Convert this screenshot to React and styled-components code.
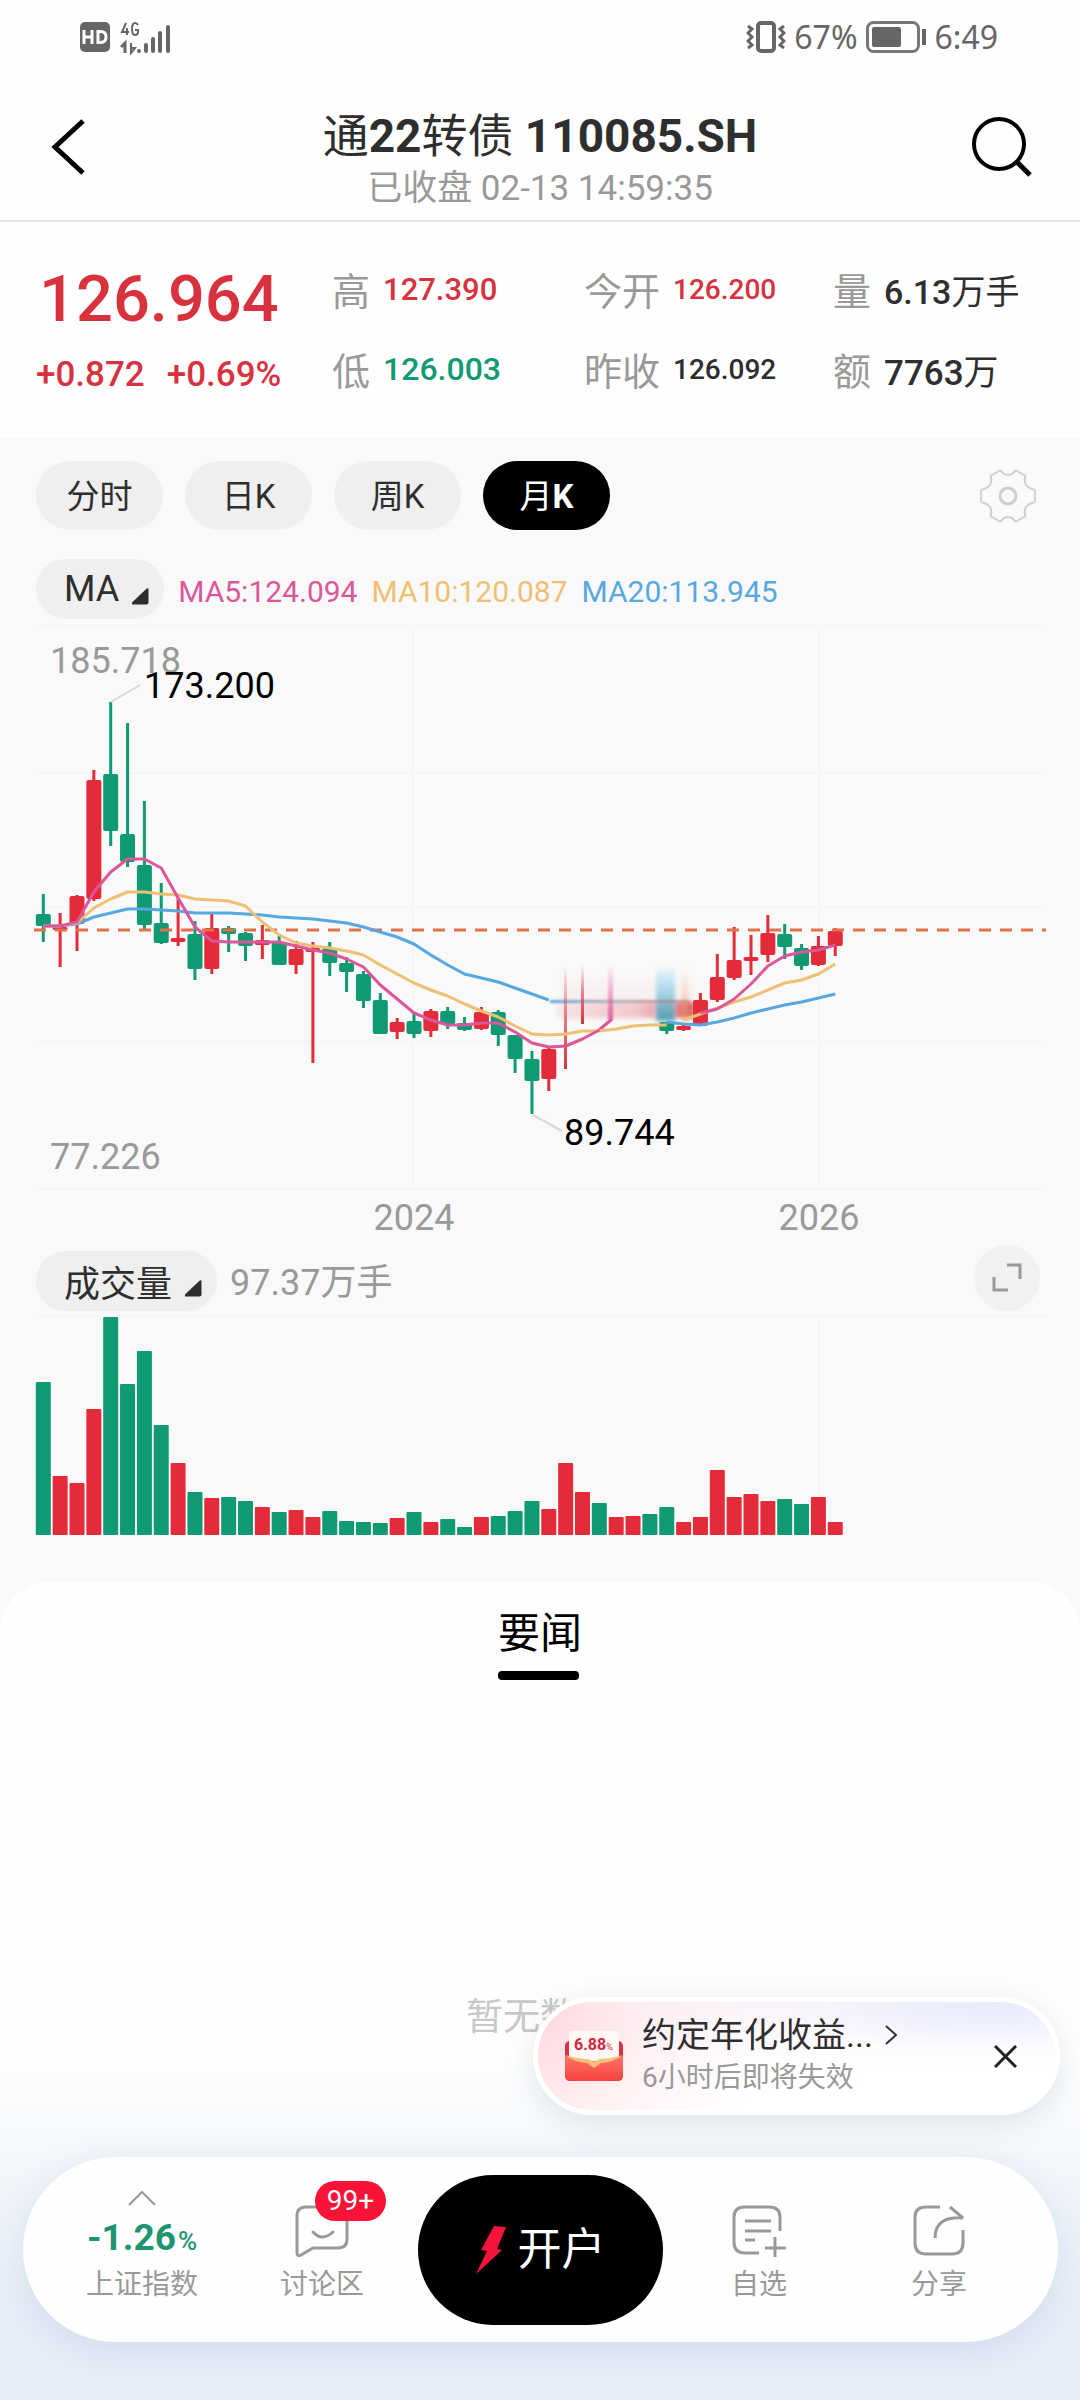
import React, { useState } from "react";
import styled, { createGlobalStyle } from "styled-components";

const theme = {
  red: "#e42b3a",
  price: "#d8323f",
  green: "#0f9a74",
  text: "#2e2e2e",
  muted: "#999999",
  panel: "#f9f9f9",
  pill: "#efefef",
  pink: "#dc569c",
  yellow: "#efbf73",
  blue: "#57a8e0",
};

const GlobalStyle = createGlobalStyle`
  * {
    box-sizing: border-box;
  }

  body {
    margin: 0;
    background: ${theme.panel};
    color: ${theme.text};
    font-family: Roboto, "Noto Sans CJK SC", sans-serif;
  }

  button {
    padding: 0;
    border: none;
    background: none;
    color: inherit;
    font: inherit;
    cursor: pointer;
  }

  svg {
    display: block;
    flex-shrink: 0;
  }
`;

const Page = styled.main`
  display: flex;
  flex-direction: column;
  min-height: 100vh;
`;

const StatusBar = styled.div`
  display: flex;
  align-items: center;
  justify-content: space-between;
  height: 73px;
  padding: 0 82px 0 80px;
  background: #fefefe;
  color: #666;
  font-family: "Noto Sans", sans-serif;
  font-size: 32px;
`;

const StatusGroup = styled.div`
  display: flex;
  align-items: center;
  gap: ${(props) => props.$gap || 8}px;
`;

const Header = styled.header`
  display: flex;
  align-items: center;
  justify-content: space-between;
  height: 149px;
  padding: 0 48px;
  background: #fefefe;
  border-bottom: 2px solid #e2e2e2;
`;

const Titles = styled.div`
  padding-top: 26px;
  text-align: center;
`;

const Title = styled.h1`
  margin: 0;
  font-size: 46px;
  font-weight: 400;
  line-height: 58px;
`;

const Subtitle = styled.p`
  margin: 0;
  color: ${theme.muted};
  font-size: 35px;
  line-height: 48px;
`;

const Quote = styled.section`
  display: flex;
  height: 216px;
  padding: 26px 36px;
  background: #fefefe;
`;

const PriceBlock = styled.div`
  width: 296px;
  color: ${theme.price};
  font-weight: 500;
  white-space: nowrap;
`;

const Price = styled.div`
  padding: 9px 0 0 3px;
  font-size: 65px;
  line-height: 84px;
`;

const Change = styled.div`
  display: flex;
  gap: 22px;
  font-size: 35px;
  line-height: 68px;
`;

const Stats = styled.dl`
  display: grid;
  flex: 1;
  grid-template-columns: 252fr 249fr 211fr;
  grid-auto-rows: 80px;
  margin: 0;
`;

const Stat = styled.div`
  display: flex;
  align-items: center;
  gap: 13px;
  white-space: nowrap;

  dt {
    color: ${theme.muted};
    font-size: 38px;
  }

  dd {
    margin: 0;
    padding-top: 2px;
    color: ${(props) => props.$color || theme.text};
    font-size: ${(props) => props.$size}px;
    font-weight: 500;
  }
`;

// the unit after a number stays at regular weight
const Unit = styled.span`
  font-weight: 400;
`;

const ChartPanel = styled.section`
  padding: 23px 0 47px;
`;

const ToolRow = styled.div`
  display: flex;
  align-items: center;
  justify-content: space-between;
  padding: 0 44px 0 36px;
`;

const Tabs = styled.div`
  display: flex;
  gap: 22px;
`;

const Tab = styled.button`
  width: 127px;
  height: 69px;
  padding-bottom: 3px;
  border-radius: 35px;
  background: ${(props) => (props.$active ? "#000" : theme.pill)};
  color: ${(props) => (props.$active ? "#fff" : theme.text)};
  font-size: 33px;

  b {
    font-weight: ${(props) => (props.$active ? 700 : 400)};
  }
`;

const IndicatorRow = styled.div`
  display: flex;
  align-items: center;
  gap: 14px;
  margin-top: 29px;
  padding: 0 36px;
`;

const Picker = styled.button`
  display: flex;
  align-items: center;
  gap: 12px;
  height: 60px;
  padding: 0 15px 0 28px;
  border-radius: 30px;
  background: ${theme.pill};
  font-size: 36px;

  svg {
    margin-top: 14px;
  }
`;

const Average = styled.span`
  padding-top: 6px;
  color: ${(props) => props.$color};
  font-size: 30px;
  line-height: 54px;
`;

const VolumeRow = styled.div`
  display: flex;
  align-items: flex-end;
  gap: 13px;
  height: 66px;
  padding: 0 40px 0 36px;
`;

const VolumeValue = styled.span`
  flex: 1;
  color: ${theme.muted};
  font-size: 36px;
  line-height: 56px;
`;

const ExpandButton = styled.button`
  display: grid;
  place-items: center;
  width: 66px;
  height: 66px;
  border-radius: 50%;
  background: #f1f1f1;
`;

const Chart = styled.svg`
  width: 100%;
  height: auto;
  font-size: 36px;
`;

const News = styled.section`
  display: flex;
  flex: 1;
  flex-direction: column;
  align-items: center;
  padding-top: 27px;
  border-radius: 50px 50px 0 0;
  background: linear-gradient(#fefefe, #fefefe 58%, #f1f5fa 74%, #e7edf8 90%);
`;

const NewsTab = styled.h2`
  margin: 0;
  color: #000;
  font-size: 42px;
  font-weight: 400;
  line-height: 50px;

  &::after {
    content: "";
    display: block;
    width: 81px;
    height: 9px;
    margin-top: 12px;
    border-radius: 4px;
    background: #000;
  }
`;

const Empty = styled.p`
  flex: 1;
  margin: 311px 0 0;
  color: #c8c8c8;
  font-size: 37px;
  line-height: 54px;
`;

const Dock = styled.footer`
  position: relative;
  align-self: stretch;
  padding: 0 22px 58px 23px;
`;

const Promo = styled.aside`
  position: absolute;
  right: 20px;
  bottom: calc(100% + 42px);
  display: flex;
  align-items: center;
  width: 527px;
  height: 118px;
  padding: 0 38px 0 26px;
  border: 5px solid #fff;
  border-radius: 59px;
  background:
    radial-gradient(circle at 0 20%, #ffd9df 0, rgba(255, 233, 236, 0.6) 20%, transparent 42%),
    radial-gradient(ellipse at 88% 0, #e6ecfd 0, transparent 34%),
    linear-gradient(#faf4fa, #fff 60%);
  box-shadow: 0 6px 30px rgba(120, 145, 165, 0.22);
`;

const PromoText = styled.div`
  flex: 1;
  margin-left: 18px;
`;

const PromoTitle = styled.a`
  display: flex;
  align-items: center;
  gap: 12px;
  color: ${theme.text};
  font-size: 34px;
  line-height: 44px;
  text-decoration: none;
`;

const PromoNote = styled.div`
  color: ${theme.muted};
  font-size: 28px;
  line-height: 42px;
`;

const Nav = styled.nav`
  display: grid;
  grid-template-columns: 1fr 1fr 257px 1fr 1fr;
  align-items: center;
  justify-items: center;
  height: 185px;
  padding: 0 29px;
  border-radius: 93px;
  background: #fefefe;
  box-shadow: 0 8px 36px rgba(110, 145, 185, 0.18);
`;

const NavItem = styled.button`
  display: flex;
  flex-direction: column;
  align-items: center;
  justify-content: flex-end;
  height: 110px;
  color: ${theme.muted};
  font-size: 28px;
  line-height: 40px;
`;

const NavIcon = styled.span`
  position: relative;
  margin-bottom: 8px;
`;

const Badge = styled.span`
  position: absolute;
  left: 20px;
  top: -24px;
  width: 71px;
  height: 40px;
  border-radius: 20px;
  background: #fa1237;
  color: #fff;
  font-size: 28px;
  line-height: 40px;
  text-align: center;
`;

const IndexValue = styled.span`
  color: #1f9470;
  font-size: 37px;
  font-weight: 700;
  line-height: 44px;
  margin: 10px 0 2px;

  small {
    margin-left: 2px;
    font-size: 26px;
    font-weight: 500;
  }
`;

const OpenButton = styled.button`
  display: flex;
  align-items: center;
  justify-content: center;
  gap: 12px;
  width: 245px;
  height: 150px;
  border-radius: 75px;
  background: #000;
  color: #fff;
  font-size: 44px;

  span {
    padding-bottom: 8px;
  }
`;

const STEP = 16.85;
const centre = (i) => 43.3 + STEP * i;

// high, body top, body bottom, low (chart units), rising
const candles = [
  [274, 294, 306, 322, 0],
  [293, 307, 310, 347, 1],
  [275, 276, 304, 331, 1],
  [150, 160, 279, 281, 1],
  [82, 154, 211, 226, 0],
  [103, 214, 242, 247, 0],
  [181, 245, 305, 310, 0],
  [263, 303, 323, 324, 0],
  [278, 318, 322, 326, 1],
  [301, 314, 349, 360, 0],
  [293, 308, 349, 354, 1],
  [306, 308, 314, 332, 0],
  [312, 313, 326, 341, 0],
  [305, 320, 325, 339, 1],
  [316, 322, 345, 345, 0],
  [321, 329, 345, 354, 1],
  [322, 328, 332, 443, 1],
  [322, 328, 343, 356, 0],
  [337, 343, 352, 372, 0],
  [351, 354, 381, 388, 0],
  [373, 380, 414, 414, 0],
  [398, 402, 412, 419, 1],
  [393, 401, 414, 418, 0],
  [389, 391, 411, 417, 1],
  [387, 391, 404, 409, 0],
  [397, 403, 410, 411, 0],
  [387, 392, 409, 410, 1],
  [390, 392, 415, 426, 0],
  [415, 415, 439, 453, 0],
  [431, 439, 461, 494, 0],
  [428, 429, 459, 471, 1],
  null,
  null,
  null,
  null,
  null,
  null,
  [402, 402, 411, 414, 0],
  [405, 406, 410, 411, 1],
  [373, 380, 406, 406, 1],
  [334, 357, 380, 382, 1],
  [307, 340, 358, 360, 1],
  [315, 337, 341, 355, 1],
  [295, 313, 335, 342, 1],
  [304, 314, 327, 339, 0],
  [324, 328, 346, 350, 0],
  [316, 326, 345, 346, 1],
  [308, 311, 326, 336, 1],
];

// each average is one or more runs: first candle index, then its levels
const averages = [
  {
    color: theme.blue,
    runs: [
      [0, [306, 306, 304, 297, 293, 289, 289, 290, 291, 293, 293, 293, 294, 295, 297, 298, 299, 301, 303, 307, 312, 317, 324, 335, 345, 354, 358, 362, 368, 374, 380]],
      [37, [402, 404, 405, 402, 398, 393, 389, 385, 382, 378, 374]],
    ],
  },
  {
    color: theme.yellow,
    runs: [
      [0, [306, 306, 303, 288, 279, 272, 272, 274, 275, 279, 280, 281, 286, 302, 315, 323, 326, 328, 331, 335, 345, 354, 363, 370, 376, 384, 391, 397, 406, 414, 415, 414, 411, 411, 409, 406, 405, 405]],
      [38, [400, 394, 388, 382, 377, 370, 363, 360, 354, 344]],
    ],
  },
  {
    color: theme.pink,
    runs: [
      [0, [306, 306, 302, 272, 252, 239, 239, 248, 278, 307, 321, 322, 322, 322, 322, 326, 330, 333, 339, 347, 365, 379, 393, 400, 405, 405, 403, 403, 412, 423, 427, 426, 419, 410]],
      [39, [393, 389, 379, 364, 346, 336, 332, 330, 325]],
    ],
  },
];

const volumes = [
  153, -59, -52, -126, 218, 151, 184, 110, -72, 43, -37, 38, 34, -28, 23, -25,
  -18, 24, 14, 13, 12, -17, 23, -13, 16, 8, -18, 19, 24, 34, -26, -72, -43, 32,
  -18, -19, 21, 28, -13, -18, -65, -38, -41, -34, 36, 31, -38, -13,
];

const stats = [
  { label: "高", value: "127.390", color: theme.price, size: 31 },
  { label: "今开", value: "126.200", color: theme.price, size: 28 },
  { label: "量", value: "6.13", unit: "万手", size: 34 },
  { label: "低", value: "126.003", color: theme.green, size: 32 },
  { label: "昨收", value: "126.092", size: 28 },
  { label: "额", value: "7763", unit: "万", size: 35 },
];

const periods = [
  ["分时", ""],
  ["日", "K"],
  ["周", "K"],
  ["月", "K"],
];

const Corner = () => (
  <svg width="18" height="17" viewBox="0 0 18 17" fill={theme.text}>
    <path d="M17.500 1v13.500q0 2-2 2H2Q0 16 1.500 14L15.500.8q2-1.300 2 .2Z" />
  </svg>
);

const CandleChart = () => (
  <Chart viewBox="0 -1 1080 626" role="img" aria-label="月K">
    <defs>
      <linearGradient id="fadePink" x1="0" y1="0" x2="0" y2="1">
        <stop offset="0" stopColor={theme.pink} stopOpacity="0" />
        <stop offset="1" stopColor={theme.pink} stopOpacity="0.9" />
      </linearGradient>
      <linearGradient id="fadeRed" x1="0" y1="0" x2="0" y2="1">
        <stop offset="0" stopColor={theme.price} stopOpacity="0" />
        <stop offset="0.5" stopColor={theme.price} stopOpacity="0.6" />
        <stop offset="1" stopColor={theme.price} />
      </linearGradient>
      <linearGradient id="fadeBlue" x1="0" y1="0" x2="0" y2="1">
        <stop offset="0" stopColor="#a9dcf0" stopOpacity="0" />
        <stop offset="0.3" stopColor="#a9dcf0" stopOpacity="0.7" />
        <stop offset="1" stopColor="#4f9fb4" />
      </linearGradient>
      <linearGradient id="fadeOrange" x1="0" y1="0" x2="0" y2="1">
        <stop offset="0" stopColor={theme.yellow} stopOpacity="0" />
        <stop offset="1" stopColor="#e98a62" stopOpacity="0.7" />
      </linearGradient>
      <linearGradient id="blush" x1="0" y1="0" x2="1" y2="0">
        <stop offset="0" stopColor={theme.price} stopOpacity="0.04" />
        <stop offset="0.6" stopColor={theme.price} stopOpacity="0.2" />
        <stop offset="1" stopColor={theme.price} stopOpacity="0.8" />
      </linearGradient>
      <linearGradient id="haze" x1="0" y1="0" x2="0" y2="1">
        <stop offset="0" stopColor={theme.price} stopOpacity="0" />
        <stop offset="1" stopColor={theme.price} stopOpacity="0.08" />
      </linearGradient>
      <linearGradient id="blueLine" x1="0" y1="0" x2="1" y2="0">
        <stop offset="0" stopColor={theme.blue} />
        <stop offset="0.4" stopColor="#8f9ea6" stopOpacity="0.7" />
        <stop offset="1" stopColor="#b0606a" stopOpacity="0.5" />
      </linearGradient>
      <filter id="soft" x="-30%" y="-30%" width="160%" height="160%">
        <feGaussianBlur stdDeviation="2" />
      </filter>
      <filter id="softer" x="-30%" y="-30%" width="160%" height="160%">
        <feGaussianBlur stdDeviation="1" />
      </filter>
    </defs>

    <g stroke="#f5f5f5" strokeWidth="2">
      <path d="M35 6H1046M35 153H1046M35 287H1046M35 422H1046M35 569H1046M413 6V569M819 6V569" />
    </g>

    <text x="50" y="53" fill="#999">185.718</text>
    <text x="50" y="549" fill="#999">77.226</text>
    <text x="414" y="610" fill="#999" textAnchor="middle">2024</text>
    <text x="819" y="610" fill="#999" textAnchor="middle">2026</text>

    {candles.map((candle, i) => {
      if (!candle) return null;
      const [high, top, bottom, low, up] = candle;
      return (
        <g key={i} fill={up ? theme.red : theme.green}>
          <rect x={centre(i) - 1.5} y={high} width="3" height={low - high} />
          <rect x={centre(i) - 7.5} y={top} width="15" height={bottom - top} rx="2" />
        </g>
      );
    })}

    <g filter="url(#soft)">
      <rect x="560" y="350" width="134" height="48" fill="url(#haze)" />
      <rect x="556" y="382" width="138" height="16" fill="url(#blush)" />
      <rect x="656" y="345" width="19" height="56" fill="url(#fadeBlue)" />
      <rect x="682" y="348" width="6" height="52" fill="url(#fadeOrange)" />
    </g>
    <g filter="url(#softer)">
      <rect x="550" y="380" width="140" height="3" fill="url(#blueLine)" />
      <rect x="608" y="345" width="5" height="55" fill="url(#fadePink)" />
    </g>
    <rect x="564" y="345" width="3" height="104" fill="url(#fadeRed)" />
    <rect x="581" y="345" width="3" height="59" fill="url(#fadeRed)" />
    <path d="M599 410L611 400" stroke={theme.pink} strokeWidth="3" strokeLinecap="round" />

    <path d="M34 310H1046" stroke="#e0714b" strokeWidth="3" strokeDasharray="12 9" />

    {averages.map(({ color, runs }) =>
      runs.map(([start, levels]) => (
        <polyline
          key={color + start}
          points={levels.map((y, i) => `${centre(start + i)},${y}`).join(" ")}
          fill="none"
          stroke={color}
          strokeWidth="3"
          strokeLinejoin="round"
        />
      ))
    )}

    <path d="M111 82L140 65M533 495L562 511" stroke="#d8d8d8" strokeWidth="2" />
    <text x="144" y="78" fill="#000">173.200</text>
    <text x="564" y="525" fill="#000">89.744</text>
  </Chart>
);

const VolumeChart = () => (
  <Chart viewBox="0 0 1080 224" role="img" aria-label="成交量">
    <path d="M35 5H1046M819 5V224" stroke="#f5f5f5" strokeWidth="2" />
    {volumes.map((volume, i) => (
      <rect
        key={i}
        x={centre(i) - 7.5}
        y={224 - Math.abs(volume)}
        width="15"
        height={Math.abs(volume)}
        rx="1"
        fill={volume < 0 ? theme.red : theme.green}
      />
    ))}
  </Chart>
);

const PhoneStatus = () => (
  <StatusBar>
    <StatusGroup $gap={10}>
      <svg width="30" height="30" viewBox="0 0 30 30">
        <rect width="30" height="30" rx="5" fill="#666" />
        <path
          d="M4 8v14M12 8v14M4 15h8M18 9.500v11h2.500q5.500 0 5.500-5.500t-5.500-5.500Z"
          fill="none"
          stroke="#fff"
          strokeWidth="3"
        />
      </svg>
      <svg width="52" height="36" viewBox="0 0 52 36" fill="none" stroke="#666">
        <path d="M6 4L2 13h7M7 9v7M18 6q-1-2-3-2-3 0-3 6t3 6 3-3v-2h-3" strokeWidth="2" />
        <path d="M1 28l4-4v10" strokeWidth="3" />
        <path d="M11 24v10l4-5h-3" strokeWidth="2" />
        <path d="M19 32v0M26 26v6M33 20v12M40 14v18M48 8v24" strokeWidth="4" strokeLinecap="round" />
      </svg>
    </StatusGroup>
    <StatusGroup>
      <svg width="40" height="32" viewBox="0 0 40 32" fill="none" stroke="#666">
        <rect x="12" y="2" width="16" height="28" rx="3" strokeWidth="4" />
        <path d="M2 5l4 3-4 4 4 4-4 4 4 4-4 3M38 5l-4 3 4 4-4 4 4 4-4 4 4 3" strokeWidth="3" />
      </svg>
      67%
      <svg width="61" height="32" viewBox="0 0 61 32">
        <rect x="1.500" y="1.500" width="51" height="29" rx="6" fill="none" stroke="#777" strokeWidth="3" />
        <rect x="6" y="6" width="29" height="20" rx="2" fill="#666" />
        <path d="M58 8v16" stroke="#666" strokeWidth="4" />
      </svg>
      6:49
    </StatusGroup>
  </StatusBar>
);

const App = () => {
  const [period, setPeriod] = useState(3);
  const [showPromo, setShowPromo] = useState(true);

  return (
    <Page>
      <GlobalStyle />
      <PhoneStatus />

      <Header>
        <button aria-label="返回">
          <svg width="60" height="56" viewBox="0 0 60 56" fill="none" stroke="#000" strokeWidth="5">
            <path d="M35 2L7 28l28 26" />
          </svg>
        </button>
        <Titles>
          <Title>
            通<b>22</b>转债 <b>110085.SH</b>
          </Title>
          <Subtitle>已收盘 02-13 14:59:35</Subtitle>
        </Titles>
        <button aria-label="搜索">
          <svg width="60" height="60" viewBox="0 0 60 60" fill="none" stroke="#000" strokeWidth="4">
            <circle cx="27" cy="27" r="25" />
            <path d="M45 45l13 13" strokeWidth="5" />
          </svg>
        </button>
      </Header>

      <Quote>
        <PriceBlock>
          <Price>126.964</Price>
          <Change>
            <span>+0.872</span>
            <span>+0.69%</span>
          </Change>
        </PriceBlock>
        <Stats>
          {stats.map(({ label, value, unit, color, size }) => (
            <Stat key={label} $color={color} $size={size}>
              <dt>{label}</dt>
              <dd>
                {value}
                {unit && <Unit>{unit}</Unit>}
              </dd>
            </Stat>
          ))}
        </Stats>
      </Quote>

      <ChartPanel>
        <ToolRow>
          <Tabs>
            {periods.map(([name, letter], i) => (
              <Tab key={name} $active={period === i} onClick={() => setPeriod(i)}>
                {name}
                <b>{letter}</b>
              </Tab>
            ))}
          </Tabs>
          <button aria-label="设置">
            <svg width="56" height="54" viewBox="0 0 56 54" fill="none" stroke="#cfcfcf" strokeWidth="2">
              <path
                strokeLinejoin="round"
                d="M19 2q2-1 3 1 2 3 6 3t6-3q1-2 3-1l7 4q2 1 1 3-1 4 1 7t6 4q3 0 3 3v8q0 3-3 3-4 1-6 4t-1 7q1 2-1 3l-7 4q-2 1-3-1-2-3-6-3t-6 3q-1 2-3 1l-7-4q-2-1-1-3 1-4-1-7t-6-4q-3 0-3-3v-8q0-3 3-3 4-1 6-4t1-7q-1-2 1-3Z"
              />
              <circle cx="28" cy="27" r="8" strokeWidth="3" />
            </svg>
          </button>
        </ToolRow>

        <IndicatorRow>
          <Picker>
            MA
            <Corner />
          </Picker>
          <Average $color={theme.pink}>MA5:124.094</Average>
          <Average $color={theme.yellow}>MA10:120.087</Average>
          <Average $color={theme.blue}>MA20:113.945</Average>
        </IndicatorRow>
        <CandleChart />

        <VolumeRow>
          <Picker>
            成交量
            <Corner />
          </Picker>
          <VolumeValue>97.37万手</VolumeValue>
          <ExpandButton aria-label="全屏">
            <svg width="30" height="30" viewBox="0 0 30 30" fill="none" stroke="#999" strokeWidth="3">
              <path d="M15 2h13v14M2 14v13h14" />
            </svg>
          </ExpandButton>
        </VolumeRow>
        <VolumeChart />
      </ChartPanel>

      <News>
        <NewsTab>要闻</NewsTab>
        <Empty>暂无数据</Empty>

        <Dock>
          {showPromo && (
            <Promo>
              <svg width="60" height="52" viewBox="0 0 60 52">
                <defs>
                  <linearGradient id="envelope" x1="0" y1="0" x2="0" y2="1">
                    <stop offset="0" stopColor="#ff7468" />
                    <stop offset="1" stopColor="#f5403f" />
                  </linearGradient>
                </defs>
                <rect x="1" y="11" width="58" height="38" rx="5" fill="#d8323c" />
                <rect x="5" y="1" width="50" height="36" rx="3" fill="#fff8f6" />
                <text x="10" y="20" fill="#d8263c" fontSize="16" fontWeight="700">
                  6.88
                  <tspan fontSize="9" fontWeight="400">%</tspan>
                </text>
                <path d="M1 26q29 10 58 0v20q0 5-5 5H6q-5 0-5-5Z" fill="url(#envelope)" />
                <path d="M1 25q14 4 23 4l6 3 6-3q9 0 23-4-9 7-22 8l-7 5-7-5Q10 32 1 25Z" fill="#f6bf78" />
              </svg>
              <PromoText>
                <PromoTitle href="#promo">
                  约定年化收益...
                  <svg width="12" height="20" viewBox="0 0 12 20" fill="none" stroke="#333" strokeWidth="2">
                    <path d="M1 1l10 9-10 9" />
                  </svg>
                </PromoTitle>
                <PromoNote>6小时后即将失效</PromoNote>
              </PromoText>
              <button aria-label="关闭" onClick={() => setShowPromo(false)}>
                <svg width="23" height="23" viewBox="0 0 23 23" stroke="#222" strokeWidth="3">
                  <path d="M1 1l21 21M22 1L1 22" />
                </svg>
              </button>
            </Promo>
          )}

          <Nav>
            <NavItem>
              <svg width="28" height="16" viewBox="0 0 28 16" fill="none" stroke="#999" strokeWidth="2">
                <path d="M1 15L14 2l13 13" />
              </svg>
              <IndexValue>
                -1.26<small>%</small>
              </IndexValue>
              上证指数
            </NavItem>
            <NavItem>
              <NavIcon>
                <svg width="54" height="52" viewBox="0 0 54 52" fill="none" stroke="#999" strokeWidth="3">
                  <path d="M11 2h32q9 0 9 9v23q0 9-9 9H18L6 50q-4 2-4-2V11q0-9 9-9Z" />
                  <path d="M18 27q9 10 20 0" strokeLinecap="round" />
                </svg>
                <Badge>99+</Badge>
              </NavIcon>
              讨论区
            </NavItem>
            <OpenButton>
              <svg width="30" height="48" viewBox="0 0 30 48" fill="#f5143c">
                <path d="M18 0l12 1-9 22 5 1L0 48l11-23-6-1Z" />
              </svg>
              <span>开户</span>
            </OpenButton>
            <NavItem>
              <NavIcon>
                <svg width="54" height="52" viewBox="0 0 54 52" fill="none" stroke="#999" strokeWidth="3">
                  <path d="M27 48H13Q2 48 2 37V12Q2 2 13 2h24q11 0 11 10v14" />
                  <path d="M13 16h26M13 26h26M13 35h10M33 43h21M43 32v21" />
                </svg>
              </NavIcon>
              自选
            </NavItem>
            <NavItem>
              <NavIcon>
                <svg width="54" height="52" viewBox="0 0 54 52" fill="none" stroke="#999" strokeWidth="3">
                  <path d="M28 2H14Q3 2 3 12v26q0 11 11 11h26q11 0 11-11V25" />
                  <path d="M38 2l13 11q-28-2-28 20" strokeLinejoin="bevel" />
                </svg>
              </NavIcon>
              分享
            </NavItem>
          </Nav>
        </Dock>
      </News>
    </Page>
  );
};

export default App;
